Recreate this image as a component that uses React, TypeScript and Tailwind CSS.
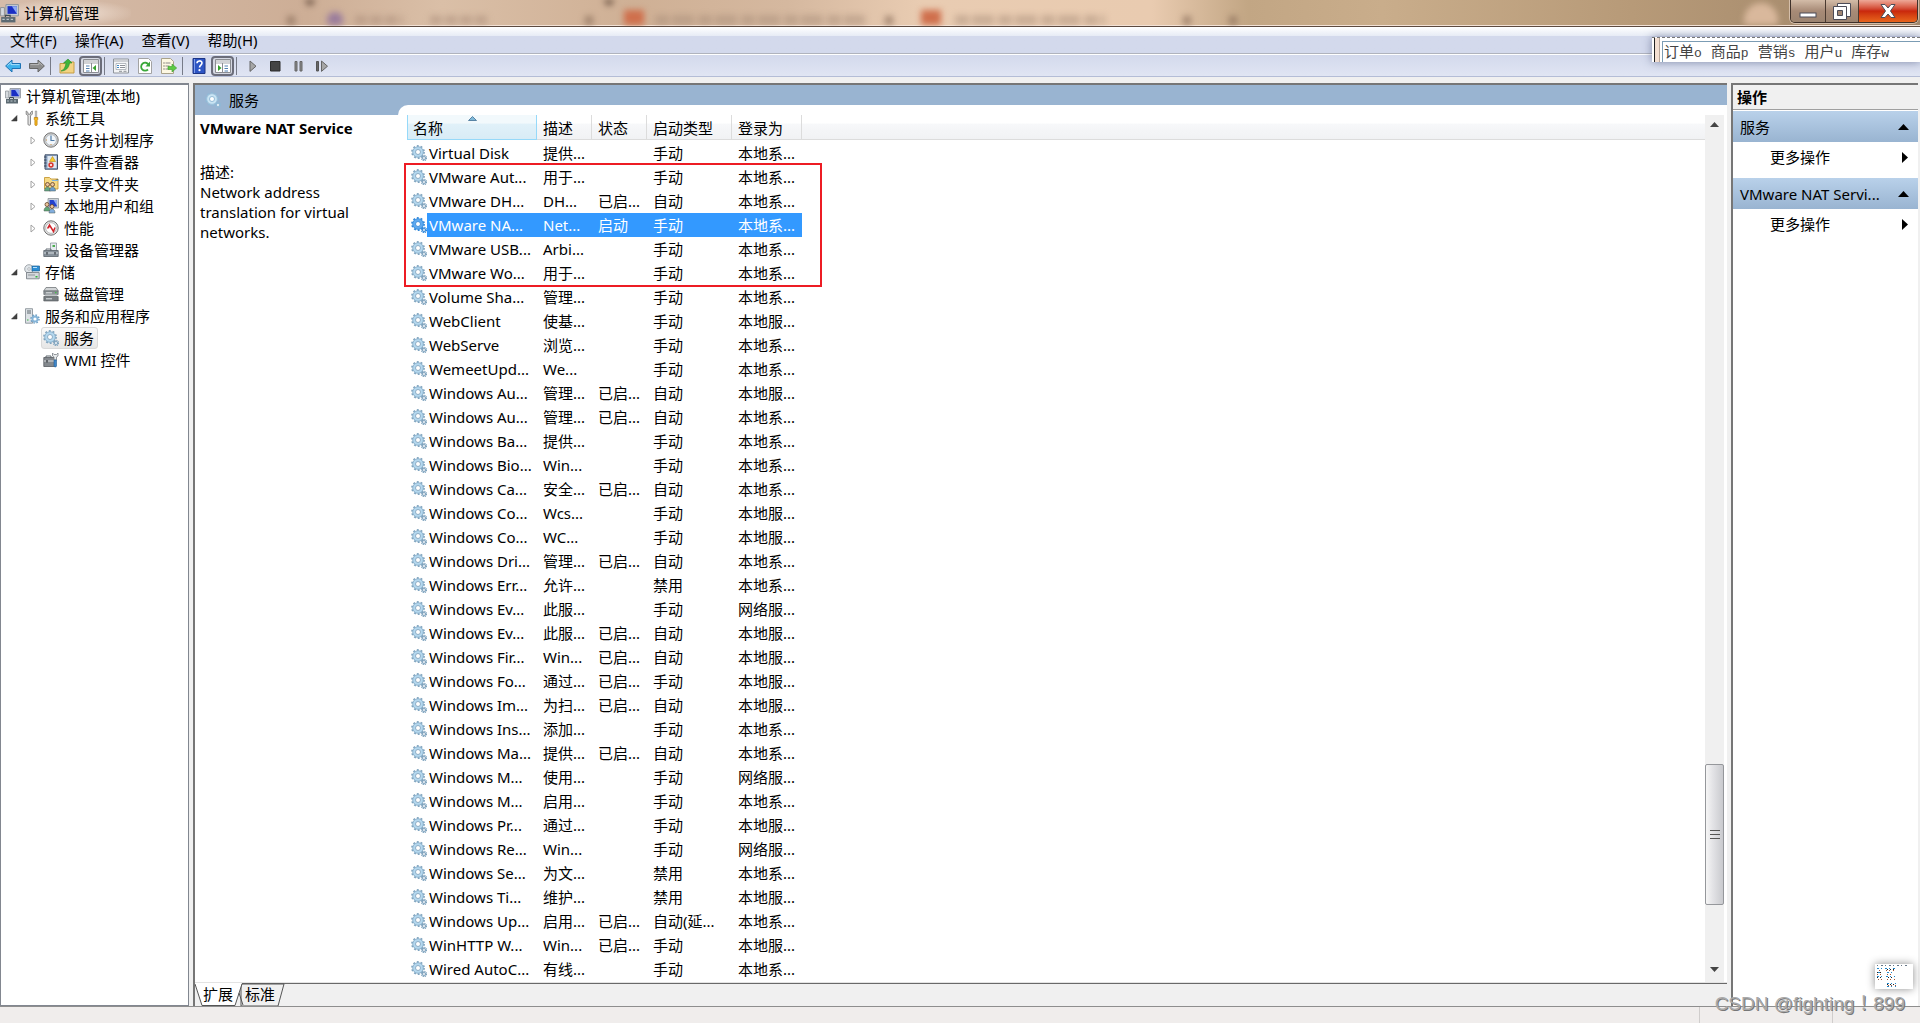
import type { ReactNode } from "react";
import clsx from "clsx";

type Service = {
  name: string;
  desc: string;
  status?: string;
  startup: string;
  logon: string;
};

const LOCAL_SYSTEM = "本地系...";
const LOCAL_SERVICE = "本地服...";
const NETWORK_SERVICE = "网络服...";
const STARTED = "已启...";

const services: Service[] = [
  { name: "Virtual Disk", desc: "提供...", startup: "手动", logon: LOCAL_SYSTEM },
  { name: "VMware Aut...", desc: "用于...", startup: "手动", logon: LOCAL_SYSTEM },
  { name: "VMware DH...", desc: "DH...", status: STARTED, startup: "自动", logon: LOCAL_SYSTEM },
  { name: "VMware NA...", desc: "Net...", status: "启动", startup: "手动", logon: LOCAL_SYSTEM },
  { name: "VMware USB...", desc: "Arbi...", startup: "手动", logon: LOCAL_SYSTEM },
  { name: "VMware Wo...", desc: "用于...", startup: "手动", logon: LOCAL_SYSTEM },
  { name: "Volume Sha...", desc: "管理...", startup: "手动", logon: LOCAL_SYSTEM },
  { name: "WebClient", desc: "使基...", startup: "手动", logon: LOCAL_SERVICE },
  { name: "WebServe", desc: "浏览...", startup: "手动", logon: LOCAL_SYSTEM },
  { name: "WemeetUpd...", desc: "We...", startup: "手动", logon: LOCAL_SYSTEM },
  { name: "Windows Au...", desc: "管理...", status: STARTED, startup: "自动", logon: LOCAL_SERVICE },
  { name: "Windows Au...", desc: "管理...", status: STARTED, startup: "自动", logon: LOCAL_SYSTEM },
  { name: "Windows Ba...", desc: "提供...", startup: "手动", logon: LOCAL_SYSTEM },
  { name: "Windows Bio...", desc: "Win...", startup: "手动", logon: LOCAL_SYSTEM },
  { name: "Windows Ca...", desc: "安全...", status: STARTED, startup: "自动", logon: LOCAL_SYSTEM },
  { name: "Windows Co...", desc: "Wcs...", startup: "手动", logon: LOCAL_SERVICE },
  { name: "Windows Co...", desc: "WC...", startup: "手动", logon: LOCAL_SERVICE },
  { name: "Windows Dri...", desc: "管理...", status: STARTED, startup: "自动", logon: LOCAL_SYSTEM },
  { name: "Windows Err...", desc: "允许...", startup: "禁用", logon: LOCAL_SYSTEM },
  { name: "Windows Ev...", desc: "此服...", startup: "手动", logon: NETWORK_SERVICE },
  { name: "Windows Ev...", desc: "此服...", status: STARTED, startup: "自动", logon: LOCAL_SERVICE },
  { name: "Windows Fir...", desc: "Win...", status: STARTED, startup: "自动", logon: LOCAL_SERVICE },
  { name: "Windows Fo...", desc: "通过...", status: STARTED, startup: "手动", logon: LOCAL_SERVICE },
  { name: "Windows Im...", desc: "为扫...", status: STARTED, startup: "自动", logon: LOCAL_SERVICE },
  { name: "Windows Ins...", desc: "添加...", startup: "手动", logon: LOCAL_SYSTEM },
  { name: "Windows Ma...", desc: "提供...", status: STARTED, startup: "自动", logon: LOCAL_SYSTEM },
  { name: "Windows M...", desc: "使用...", startup: "手动", logon: NETWORK_SERVICE },
  { name: "Windows M...", desc: "启用...", startup: "手动", logon: LOCAL_SYSTEM },
  { name: "Windows Pr...", desc: "通过...", startup: "手动", logon: LOCAL_SERVICE },
  { name: "Windows Re...", desc: "Win...", startup: "手动", logon: NETWORK_SERVICE },
  { name: "Windows Se...", desc: "为文...", startup: "禁用", logon: LOCAL_SYSTEM },
  { name: "Windows Ti...", desc: "维护...", startup: "禁用", logon: LOCAL_SERVICE },
  { name: "Windows Up...", desc: "启用...", status: STARTED, startup: "自动(延...", logon: LOCAL_SYSTEM },
  { name: "WinHTTP W...", desc: "Win...", status: STARTED, startup: "手动", logon: LOCAL_SERVICE },
  { name: "Wired AutoC...", desc: "有线...", startup: "手动", logon: LOCAL_SYSTEM },
];

const SELECTED = 3;

function Icon({ children, className = "size-4" }: { children: ReactNode; className?: string }) {
  return (
    <svg viewBox="0 0 16 16" className={clsx("shrink-0", className)} aria-hidden="true">
      {children}
    </svg>
  );
}

function GearsIcon({ selected, pale }: { selected?: boolean; pale?: boolean }) {
  const rim = selected ? "#2f86d8" : pale ? "#8fb9d6" : "#7fa3be";
  const body = selected ? "#5eaaf0" : pale ? "#c9e4f3" : "#b3d7ee";
  return (
    <Icon>
      <circle cx="7" cy="7" r="6" fill="none" stroke={rim} strokeWidth="1.8" strokeDasharray="1.885 1.885" />
      <circle cx="7" cy="7" r="4" fill="none" stroke={body} strokeWidth="3" />
      <circle cx="7" cy="7" r="5.3" fill="none" stroke={rim} strokeWidth=".7" />
      <circle cx="7" cy="7" r="2.5" fill="#fff" stroke={rim} strokeWidth=".9" />
      <circle cx="13" cy="13" r="2.5" fill="none" stroke={rim} strokeWidth="1.4" strokeDasharray="1.2 .76" />
      <circle cx="13" cy="13" r="1.5" fill="#fff" stroke={rim} strokeWidth="1.2" />
    </Icon>
  );
}

function ComputerIcon({ className }: { className?: string }) {
  return (
    <Icon className={className}>
      <path d="M5 .5h10.500v9.500H5z" fill="#c9cfd6" stroke="#8b929a" strokeWidth=".8" />
      <path d="M6.300 1.800h7.900v6.500H6.300z" fill="#1a2fc4" />
      <path d="M10 1.800h4.200v6.500z" fill="#8ea9f2" />
      <path d="M.5 3h3.200v7H.5z" fill="#d6dade" stroke="#848a90" strokeWidth=".7" />
      <path d="M1 11h12v4.500H1z" fill="#5c6a72" />
      <path d="M4.500 11V9.500h4V11" fill="none" stroke="#3f4b52" />
      <path d="M2 13h10" stroke="#b9c4ca" strokeDasharray="2 1.500" />
    </Icon>
  );
}

function ToolsIcon() {
  return (
    <Icon>
      <path d="M2.200 1v3.300l1.800 1.200v8.700c0 1.400 2.500 1.400 2.500 0V5.500L8.300 4.300V1L6.500 2.500v1.700H4V2.500z" fill="#e4e4e4" stroke="#7d7d7d" strokeWidth=".9" />
      <path d="M11.300 1h1.400v6.500h-1.400z" fill="#d0d0d0" stroke="#888" strokeWidth=".6" />
      <path d="M10.300 7.500h3.400v2l-.6 1v4.300c0 1-2.200 1-2.200 0v-4.300l-.6-1z" fill="#f5b81f" stroke="#b97a09" strokeWidth=".7" />
    </Icon>
  );
}

function ClockIcon() {
  return (
    <Icon>
      <circle cx="8" cy="8" r="7.200" fill="#d3d3d3" stroke="#757575" strokeWidth="1" />
      <circle cx="8" cy="8" r="5.400" fill="#f2f6fa" stroke="#a2a9af" strokeWidth=".7" />
      <path d="M8 3.500V8.500h3.500" fill="none" stroke="#4d7aa6" strokeWidth="1.200" />
      <path d="M8 12v1M3 8h1" stroke="#c98a3c" />
    </Icon>
  );
}

function EventIcon() {
  return (
    <Icon>
      <path d="M2 .8h12.500v14.400H2z" fill="#8ea6c4" stroke="#44536b" />
      <path d="M4.500 2h9v12h-9z" fill="#dfe8f3" />
      <path d="M1 3h2.500M1 6h2.500M1 9h2.500M1 12h2.500" stroke="#35435a" />
      <path d="M9.500 2.500l3 5h-6z" fill="#f7cc2c" stroke="#b98c0b" strokeWidth=".6" />
      <circle cx="8" cy="11" r="2.700" fill="#d93a31" />
      <path d="M7 10l2 2M9 10l-2 2" stroke="#fff" strokeWidth=".8" />
    </Icon>
  );
}

function Person({ x, y, color }: { x: number; y: number; color: string }) {
  return (
    <g>
      <path d={`M${x - 3} ${y + 6.5}c0-5.500 6-5.500 6 0z`} fill={color} stroke="#4b5a52" strokeWidth=".5" />
      <circle cx={x} cy={y} r="2" fill="#edc59b" stroke="#5e4029" strokeWidth=".8" />
    </g>
  );
}

function SharedIcon() {
  return (
    <Icon>
      <path d="M1.500 3V1.500h5l1.500 1.500h7v10h-13.500z" fill="#f6d983" stroke="#c69b38" strokeWidth=".9" />
      <path d="M9 4.500h6v-1" stroke="#7fb4de" />
      <Person x={4.500} y={8.500} color="#65a883" />
      <Person x={9.500} y={8.500} color="#6d9dcb" />
    </Icon>
  );
}

function UsersIcon() {
  return (
    <Icon>
      <path d="M5 .5h10.500v9.500H5z" fill="#ccd2d8" stroke="#8d949b" strokeWidth=".8" />
      <path d="M6.500 2h7.500v6.500H6.500z" fill="#2341cd" />
      <path d="M10.500 2H14v6z" fill="#8fa9f2" />
      <Person x={4} y={6.500} color="#60a877" />
      <Person x={9} y={8.500} color="#82aede" />
    </Icon>
  );
}

function PerformanceIcon() {
  return (
    <Icon>
      <circle cx="8" cy="8" r="7.200" fill="#e4e4e4" stroke="#6f6f6f" />
      <circle cx="8" cy="8" r="5.300" fill="#fff" stroke="#999" strokeWidth=".6" />
      <path d="M4.500 8.500l2-3.500 4 6.500 1.500-4M6.500 5l-1 3" fill="none" stroke="#d0252b" strokeWidth="1.500" />
    </Icon>
  );
}

function DeviceIcon() {
  return (
    <Icon>
      <path d="M7.500 1h6v8h-6z" fill="#e6ebef" stroke="#8b949c" strokeWidth=".8" />
      <path d="M9.500 3h2.500v2h-2.500z" fill="#4cae4f" />
      <path d="M3 8.500V7h5v1.500" fill="none" stroke="#666f76" />
      <path d="M.8 8.500h14.400v6H.8z" fill="#87919a" stroke="#59626a" strokeWidth=".8" />
      <path d="M1 11h14" stroke="#d6dce1" />
      <path d="M4 10v2.500M12 10v2.500" stroke="#343b41" strokeWidth="1.200" />
    </Icon>
  );
}

function StorageIcon() {
  return (
    <Icon>
      <circle cx="5" cy="5" r="4.300" fill="#e1e6ea" stroke="#8b9298" strokeWidth=".8" />
      <circle cx="5" cy="5" r="1.300" fill="#fff" stroke="#8b9298" strokeWidth=".6" />
      <path d="M8 2h7.500v5H8z" fill="#2c8fd6" stroke="#1e5f92" strokeWidth=".7" />
      <path d="M9 3.500h4" stroke="#b7e0fa" />
      <path d="M2.500 8.500h12.700v6.300H2.500z" fill="#d4d8dc" stroke="#70777d" strokeWidth=".8" />
      <path d="M4 11h7" stroke="#8f969b" />
      <path d="M11.500 12h2v1.500h-2z" fill="#2fb53a" />
    </Icon>
  );
}

function DiskIcon() {
  return (
    <Icon>
      <path d="M3 1.500h10l2.300 3.500H.7z" fill="#d2d5d7" stroke="#72777b" strokeWidth=".8" />
      <path d="M.8 5h14.400v3.500H.8z" fill="#8e9498" stroke="#5d6266" strokeWidth=".6" />
      <path d="M2.500 8.500h11l1.700 2H.8z" fill="#c2c6c9" />
      <path d="M.8 10.500h14.400V15H.8z" fill="#767c80" stroke="#505458" strokeWidth=".6" />
      <path d="M3 12.800h6M3 6.800h6" stroke="#e2e4e6" />
      <path d="M12 6h1.500v1.200H12z" fill="#45bd49" />
    </Icon>
  );
}

function ServerIcon() {
  return (
    <Icon>
      <path d="M1.500.7h7v14.500h-7z" fill="#dde2e6" stroke="#8c949b" strokeWidth=".9" />
      <path d="M3 3h4M3 5h4" stroke="#5f696f" />
      <path d="M3 12h1.500" stroke="#35b23e" strokeWidth="1.200" />
      <circle cx="11" cy="11" r="4" fill="none" stroke="#6d9dc2" strokeWidth="1.500" strokeDasharray="1.570 1.570" />
      <circle cx="11" cy="11" r="2.500" fill="#fff" stroke="#84b4d8" strokeWidth="1.800" />
    </Icon>
  );
}

function WmiIcon() {
  return (
    <Icon>
      <path d="M3 5.500V4h5v1.500" fill="none" stroke="#5b646b" />
      <path d="M.8 5.500h11.700v9H.8z" fill="#84898e" stroke="#565b60" strokeWidth=".8" />
      <path d="M1 9h11.500" stroke="#dadde0" />
      <path d="M4 8v2.500" stroke="#33383c" strokeWidth="1.300" />
      <path d="M9.500 1v3l1.500 1v3h2.500V5L15 4V1l-1.500 1.500h-2.500z" fill="#e8ebed" stroke="#7b8287" strokeWidth=".8" />
      <path d="M11 8h2.500v6c0 1.300-2.500 1.300-2.500 0z" fill="#3f87c9" stroke="#235d93" strokeWidth=".6" />
    </Icon>
  );
}

type TreeItem = {
  label: string;
  level: 0 | 1 | 2;
  icon: ReactNode;
  arrow?: "open" | "closed";
  selected?: boolean;
};

const tree: TreeItem[] = [
  { label: "计算机管理(本地)", level: 0, icon: <ComputerIcon /> },
  { label: "系统工具", level: 1, icon: <ToolsIcon />, arrow: "open" },
  { label: "任务计划程序", level: 2, icon: <ClockIcon />, arrow: "closed" },
  { label: "事件查看器", level: 2, icon: <EventIcon />, arrow: "closed" },
  { label: "共享文件夹", level: 2, icon: <SharedIcon />, arrow: "closed" },
  { label: "本地用户和组", level: 2, icon: <UsersIcon />, arrow: "closed" },
  { label: "性能", level: 2, icon: <PerformanceIcon />, arrow: "closed" },
  { label: "设备管理器", level: 2, icon: <DeviceIcon /> },
  { label: "存储", level: 1, icon: <StorageIcon />, arrow: "open" },
  { label: "磁盘管理", level: 2, icon: <DiskIcon /> },
  { label: "服务和应用程序", level: 1, icon: <ServerIcon />, arrow: "open" },
  { label: "服务", level: 2, icon: <GearsIcon />, selected: true },
  { label: "WMI 控件", level: 2, icon: <WmiIcon /> },
];

const treeIndent = ["pl-0.5", "pl-[9px]", "pl-7"];

function TitleBar() {
  return (
    <header className="relative flex h-[27px] items-start justify-between overflow-hidden border-b border-[#5c4a40] bg-[linear-gradient(90deg,#d6bcaa_0%,#cdae96_16%,#dabfa7_23%,#cfb095_33%,#d5b89f_41%,#e9ccb2_48%,#e9cbb0_60%,#c2a684_65%,#c9ad8b_72%,#b79a78_85%,#9f8569_100%)]">
      <div className="absolute inset-x-0 bottom-0 h-px bg-[#f3e2d6]" />
      {/* browser tabs showing through the glass */}
      <svg className="absolute top-0 left-0 h-[25px] w-[1800px] blur-[3px]" aria-hidden="true">
        <circle cx="335" cy="20" r="8" fill="#9a7c9c" />
        <path d="M355 20h48M430 20h58" stroke="#a98c77" strokeWidth="9" strokeOpacity=".5" strokeDasharray="12 3" />
        <path d="M655 20h210M955 20h150" stroke="#a58a75" strokeWidth="10" strokeOpacity=".45" strokeDasharray="14 3 22 4" />
        <path d="M624 10h20v16h-20zM921 10h20v16h-20z" fill="#cf6f4c" />
        <path d="M287 16h8v9h-8zM585 16h8v9h-8zM885 16h8v9h-8zM1183 16h8v9h-8zM1229 16h8v9h-8z" fill="#8c6f5b" fillOpacity=".7" />
        <path d="M603 0h12l-6 6zM304 0h12l-6 6z" fill="#5d4638" />
        <circle cx="1761" cy="20" r="17" fill="#d9b89c" />
      </svg>
      <div className="relative flex h-[26px] items-center gap-[5px] bg-[radial-gradient(ellipse_at_center,rgba(255,245,238,0.75),transparent_75%)] pr-8">
        <ComputerIcon className="size-[19px]" />
        <h1>计算机管理</h1>
      </div>
      <div className="relative mr-0.5 flex h-[23px] rounded-b-[5px] border border-t-0 border-[#3f312a] shadow-[0_0_0_1px_rgba(255,240,230,0.5)]">
        <button aria-label="最小化" className="flex w-[35px] items-center justify-center rounded-bl border-r border-[#4a3a30] bg-linear-to-b from-[#d3bca8] via-[#a78a76] via-50% to-[#9c8470]">
          <svg width="18" height="16" aria-hidden="true"><rect x="1" y="10" width="16" height="4" fill="#fff" stroke="#4c4c58" /></svg>
        </button>
        <button aria-label="还原" className="flex w-[33px] items-center justify-center border-r border-[#4a3a30] bg-linear-to-b from-[#d3bca8] via-[#a78a76] via-50% to-[#9c8470]">
          <svg width="20" height="18" aria-hidden="true">
            <path d="M5.500 1.500h13v13h-13z" fill="#fff" stroke="#4c4c58" />
            <path d="M1.500 4.500h13v13h-13z" fill="#fff" stroke="#4c4c58" />
            <path d="M5.500 8.500h5v5h-5z" fill="#a08672" stroke="#4c4c58" />
          </svg>
        </button>
        <button aria-label="关闭" className="flex w-[58px] items-center justify-center rounded-br bg-linear-to-b from-[#eda898] via-[#c9260c] via-50% to-[#e8641c]">
          <svg width="18" height="16" aria-hidden="true">
            <path d="M2 1.500h4l3 3.500 3-3.500h4L11.500 8l4.500 6.500h-4L9 11l-3 3.500H2L6.500 8z" fill="#fff" stroke="#4c4c58" />
          </svg>
        </button>
      </div>
    </header>
  );
}

function ToolButton({ label, pressed, children }: { label: string; pressed?: boolean; children: ReactNode }) {
  return (
    <button
      aria-label={label}
      className={clsx(
        "flex h-5 w-[23px] items-center justify-center",
        pressed && "rounded border-2 border-[#6b6d7a] bg-[#d5d8e2]",
      )}
    >
      {children}
    </button>
  );
}

function Separator() {
  return <div className="mr-[3px] ml-px h-[18px] w-px bg-[#777b88]" />;
}

function PaneIcon({ flip }: { flip?: boolean }) {
  return (
    <Icon>
      <g transform={flip ? "matrix(-1 0 0 1 16 0)" : undefined}>
        <path d="M.5 1.500h15v13H.5z" fill="#fff" stroke="#8b8d92" />
        <path d="M1 3h14M1 5h14" stroke="#a3a6ac" />
        <path d="M8.500 5v9.500" stroke="#8b8d92" />
        <path d="M3 8h3.500M3 10.500h3.500M3 13h3.500" stroke="#4f7fb0" />
        <path d="M13 7v6l-3.500-3z" fill="#35a02c" />
      </g>
    </Icon>
  );
}

function Toolbar() {
  return (
    <div className="flex h-[23px] items-center gap-px border-t border-b border-t-white border-b-[#b4bdd6] bg-linear-to-b from-[#d3d9ec] to-[#e0e5f3] pl-px">
      <ToolButton label="后退">
        <Icon><path d="M.6 8L7 2v3.500h8.500v5H7V14z" fill="#3fb2ec" stroke="#1e72b4" /><path d="M2.500 7.500L6 4.300v2.300h8.500" fill="none" stroke="#a5defa" /></Icon>
      </ToolButton>
      <ToolButton label="前进">
        <Icon><path d="M15.400 8L9 2v3.500H.5v5H9V14z" fill="#8c8c8c" stroke="#666" /><path d="M1.500 6.600H10V4.300L13.500 7.500" fill="none" stroke="#b8b8b8" /></Icon>
      </ToolButton>
      <Separator />
      <ToolButton label="向上">
        <Icon>
          <path d="M1 5.500h5L7.500 4H15v11H1z" fill="#f3d382" stroke="#c59d44" />
          <path d="M2 13C5 12 6.500 9 7 5H4.500L9 1l4 4h-2.500C10 10 6.500 13 2 13z" fill="#3fb53a" stroke="#27892b" strokeWidth=".6" />
        </Icon>
      </ToolButton>
      <ToolButton label="显示/隐藏控制台树" pressed><PaneIcon /></ToolButton>
      <Separator />
      <ToolButton label="属性">
        <Icon>
          <path d="M.5 1h15v14H.5z" fill="#f3f4f6" stroke="#8f949b" />
          <path d="M1 3h14" stroke="#a9adb3" />
          <path d="M3 5.500h10v6H3z" fill="#fff" stroke="#9aa0a8" strokeWidth=".7" />
          <path d="M4 7.500h2M4 9.500h2" stroke="#3d87c4" />
          <path d="M7 7.500h5M7 9.500h5" stroke="#8c9096" />
          <path d="M6 13.300h3M10.500 13.300h3" stroke="#8c9096" />
        </Icon>
      </ToolButton>
      <ToolButton label="刷新">
        <Icon>
          <path d="M1.500.5h10l3 3v12h-13z" fill="#fff" stroke="#a3a3a3" />
          <path d="M11 11.500a4 4 0 1 1 .5-5" fill="none" stroke="#3aa83a" strokeWidth="1.800" />
          <path d="M13 3.500v5H8.500z" fill="#3aa83a" />
        </Icon>
      </ToolButton>
      <ToolButton label="导出列表">
        <Icon>
          <path d="M.5.500h9l3 3v12H.5z" fill="#fdf8e3" stroke="#a9a28a" />
          <path d="M2.500 5h1M2.500 8h1M2.500 11h1" stroke="#333" />
          <path d="M4.500 5h5M4.500 8h4M4.500 11h4" stroke="#8a8a8a" />
          <path d="M7 8.500h4V6l4.700 4-4.700 4v-2.500H7z" fill="#5cc944" stroke="#3a9c2c" strokeWidth=".6" />
        </Icon>
      </ToolButton>
      <Separator />
      <ToolButton label="帮助">
        <Icon>
          <path d="M2 .5h12v15H2z" fill="#2d55c4" stroke="#1c3585" />
          <path d="M3.500 1v14" stroke="#7f9dea" />
          <path d="M6 5.200c0-3 5-3 5-.2 0 2-2.500 2.200-2.500 4.500" fill="none" stroke="#fff" strokeWidth="1.600" />
          <circle cx="8.500" cy="12.200" r="1.100" fill="#fff" />
        </Icon>
      </ToolButton>
      <ToolButton label="显示/隐藏操作窗格" pressed><PaneIcon flip /></ToolButton>
      <Separator />
      <div className="flex">
        <ToolButton label="启动">
          <Icon><path d="M5 3l6 5.200-6 5.200z" fill="#a6a6a6" stroke="#666" /></Icon>
        </ToolButton>
        <ToolButton label="停止">
          <Icon><path d="M2.500 3.500h9.500V13H2.500z" fill="#444" stroke="#2c2c2c" /></Icon>
        </ToolButton>
        <ToolButton label="暂停">
          <Icon><path d="M4 3.500h2v9.500H4zM9 3.500h2v9.500H9z" fill="#888" stroke="#666" /></Icon>
        </ToolButton>
        <ToolButton label="重新启动">
          <Icon><path d="M2.500 3.500h2v9.500h-2z" fill="#666" stroke="#555" /><path d="M7.500 3l6 5.200-6 5.200z" fill="#a6a6a6" stroke="#666" /></Icon>
        </ToolButton>
      </div>
    </div>
  );
}

function ConsoleTree() {
  return (
    <nav className="w-[189px] shrink-0 border border-t-2 border-[#828790] bg-white">
      <ul>
        {tree.map((item) => (
          <li key={item.label} className={clsx("flex h-[22px] items-center", treeIndent[item.level])}>
            {item.level > 0 && (
              <span className="flex w-3 pl-px">
                {item.arrow === "open" && (
                  <svg width="7" height="7" aria-hidden="true"><path d="M6 .5V6H.5z" fill="#404040" stroke="#333" strokeWidth=".5" /></svg>
                )}
                {item.arrow === "closed" && (
                  <svg width="6" height="9" aria-hidden="true"><path d="M1 1l4 3.500L1 8z" fill="#fff" stroke="#a2a2a2" /></svg>
                )}
              </span>
            )}
            <button
              className={clsx(
                "flex h-[22px] items-center gap-[5px] rounded-[3px] border px-px pr-[3px] whitespace-nowrap",
                item.selected ? "border-[#d9d9d9] bg-linear-to-b from-[#fafafa] to-[#e6e6e6]" : "border-transparent",
              )}
            >
              {item.icon}
              {item.label}
            </button>
          </li>
        ))}
      </ul>
    </nav>
  );
}

const columns = ["名称", "描述", "状态", "启动类型", "登录为"];

function ServiceTable() {
  return (
    <div className="relative min-w-0 flex-1">
      <table className="w-full table-fixed border-collapse text-left whitespace-nowrap">
        <colgroup>
          <col className="w-[130px]" />
          <col className="w-[55px]" />
          <col className="w-[55px]" />
          <col className="w-[85px]" />
          <col className="w-[70px]" />
          <col />
        </colgroup>
        <thead>
          <tr className="h-[26px]">
            {columns.map((column, i) => (
              <th key={column} className="p-0 align-top font-normal">
                <button
                  className={clsx(
                    "relative flex h-[25px] w-full items-center pt-0.5 text-left",
                    i === 0
                      ? "border border-t-0 border-[#96d9f9] bg-linear-to-b from-[#f2f9fc] from-35% via-[#e1f1f9] via-36% to-[#d8ecf6] pl-[5px]"
                      : "border-r border-b border-[#dcdcdc] bg-linear-to-b from-white from-35% via-[#f7f8fa] via-36% to-[#f1f2f4] pl-1.5",
                  )}
                >
                  {column}
                  {i === 0 && (
                    <svg width="9" height="5" className="absolute top-px left-1/2 -ml-1" aria-hidden="true">
                      <path d="M.5 4.500L4.500.5l4 4z" fill="#7fb9d8" stroke="#3f6f93" strokeWidth=".8" />
                    </svg>
                  )}
                </button>
              </th>
            ))}
            <td className="p-0 align-top">
              <div className="h-[25px] border-b border-[#dcdcdc] bg-linear-to-b from-white from-35% via-[#f7f8fa] via-36% to-[#f1f2f4]" />
            </td>
          </tr>
        </thead>
        <tbody>
          {services.map((service, i) => {
            const selected = i === SELECTED;
            const cell = clsx("p-0 pl-1.5", selected && "bg-[#3399ff] text-white");
            return (
              <tr key={i} className="h-6">
                <td className="p-0">
                  <div className="flex h-6 items-center pl-1">
                    <GearsIcon selected={selected} />
                    <span className={clsx("flex h-6 flex-1 items-center pl-0.5", selected && "bg-[#3399ff] text-white")}>
                      {service.name}
                    </span>
                  </div>
                </td>
                <td className={cell}>{service.desc}</td>
                <td className={cell}>{service.status}</td>
                <td className={cell}>{service.startup}</td>
                <td className={cell}>{service.logon}</td>
                <td />
              </tr>
            );
          })}
        </tbody>
      </table>
      {/* highlight round the VMware services */}
      <div className="pointer-events-none absolute top-12 -left-[3px] h-[124px] w-[418px] border-2 border-[#ed1c24]" />
    </div>
  );
}

function ScrollBar() {
  return (
    <div className="mr-[3px] flex w-[19px] shrink-0 flex-col items-center bg-[#f0f0f0]">
      <button aria-label="向上滚动" className="flex h-[19px] items-center">
        <svg width="9" height="5" aria-hidden="true"><path d="M0 5l4.500-5L9 5z" fill="#444" /></svg>
      </button>
      <div className="flex-12" />
      <div className="flex h-[141px] w-full flex-col items-center justify-center gap-[3px] rounded-xs border border-[#95979b] bg-linear-to-r from-[#f6f6f6] via-[#e3e3e6] via-40% to-[#c9cace]">
        <div className="h-px w-2.5 bg-[#555]" />
        <div className="h-px w-2.5 bg-[#555]" />
        <div className="h-px w-2.5 bg-[#555]" />
      </div>
      <div className="flex-1" />
      <button aria-label="向下滚动" className="flex h-[25px] items-center">
        <svg width="9" height="5" aria-hidden="true"><path d="M0 0l4.500 5L9 0z" fill="#444" /></svg>
      </button>
    </div>
  );
}

function ViewTabs() {
  return (
    <div className="relative flex h-[23px] items-center border-t border-[#696969] bg-[#f0f0f0] pb-0.5 pl-2">
      <svg width="92" height="23" className="absolute -top-px left-0" aria-hidden="true">
        <path d="M46 1h43l-6 22H46z" fill="#f0f0f0" stroke="#555" />
        <path d="M-1 0l8 22.500h33L47 0z" fill="#fff" />
        <path d="M0 1l7 21.500h33L47 1M44 10l4 12" fill="none" stroke="#555" />
      </svg>
      <button className="relative">扩展</button>
      <button className="relative ml-3">标准</button>
    </div>
  );
}

function ServicesPane() {
  return (
    <main className="flex min-w-0 flex-1 flex-col border-t-2 border-l-2 border-[#767676] bg-white">
      <div className="flex h-[30px] bg-[#99b4d1]">
        <div className="flex w-[203px] items-center gap-2 pl-2.5">
          <GearsIcon pale />
          <h2>服务</h2>
        </div>
        <div className="h-2.5 flex-1 self-end rounded-tl-[10px] bg-white" />
      </div>
      <div className="flex flex-1">
        <section className="w-[212px] shrink-0 pt-[3px] pr-12 pl-[5px] leading-5">
          <h3 className="font-bold whitespace-nowrap">VMware NAT Service</h3>
          <p className="pt-6">描述:</p>
          <p>Network address translation for virtual networks.</p>
        </section>
        <ServiceTable />
        <ScrollBar />
      </div>
      <div className="h-px bg-[#e3e3e3]" />
      <ViewTabs />
    </main>
  );
}

function ActionGroup({ title }: { title: string }) {
  return (
    <section className="pb-1.5">
      <button className="flex h-[31px] w-full items-center justify-between bg-linear-to-b from-[#b9d1ea] to-[#99b4d1] pr-[9px] pl-[7px] text-left whitespace-nowrap">
        {title}
        <svg width="11" height="6" aria-hidden="true"><path d="M0 6l5.500-6L11 6z" fill="#000" /></svg>
      </button>
      <button className="flex h-[30px] w-full items-center justify-between pr-2.5 pl-[37px]">
        更多操作
        <svg width="6" height="11" aria-hidden="true"><path d="M0 0l6 5.500L0 11z" fill="#000" /></svg>
      </button>
    </section>
  );
}

function ActionsPane() {
  return (
    <aside className="mr-0.5 w-[187px] shrink-0 border-t-2 border-l-2 border-[#767676] bg-white">
      <h2 className="mb-px h-[25px] border-b border-[#a0a0a0] bg-[#f0f0f0] pl-1 leading-6 font-bold">操作</h2>
      <ActionGroup title="服务" />
      <ActionGroup title="VMware NAT Servi..." />
    </aside>
  );
}

const shortcuts = [
  ["订单", "o"],
  ["商品", "p"],
  ["营销", "s"],
  ["用户", "u"],
  ["库存", "w"],
];

function FloatingShortcuts() {
  return (
    <div className="absolute top-[37px] right-0 flex h-[25px] w-[268px] border-t border-dashed border-t-[#777] bg-white pl-0.5 shadow-[0_0_10px_rgba(70,80,120,0.6)]">
      <div className="w-1.5 border-x border-l-[#222] border-r-[#b9a79b] bg-[#f3dfd2]" />
      <div className="mt-[3px] ml-0.5 flex flex-1 items-center gap-[9px] border-t border-l border-[#7b9cb4] pl-px">
        {shortcuts.map(([label, key]) => (
          <button key={key} className="whitespace-nowrap text-[#444]">
            {label}
            <span className="font-['Liberation_Mono',monospace] text-[13px]">{key}</span>
          </button>
        ))}
      </div>
    </div>
  );
}

function PreviewThumb() {
  return (
    <div className="absolute right-[7px] bottom-[34px] h-[25px] w-[38px] bg-white shadow-[0_0_8px_rgba(0,0,0,0.45)]">
      <svg width="38" height="25" aria-hidden="true">
        <path d="M2 1.500h32" stroke="#678" strokeDasharray="1 3 2 2" />
        <path d="M2 4.500h18M3 8.500h4M12 8.500h8M2 12.500h5M11 12.500h9M12 19.500h9M12 22.500h9" stroke="#28c" strokeDasharray="2 2 1 3" />
        <path d="M4 6.500h3M11 6.500h8M2 10.500h5M12 10.500h7M3 15.500h4M12 15.500h8M13 21.500h9" stroke="#a53" strokeDasharray="1 2 1 3" />
        <path d="M2 8.500h6M12 5.500h7M2 13.500h6M13 13.500h6M12 20.500h9" stroke="#222" strokeDasharray="1 2" />
      </svg>
    </div>
  );
}

export default function App() {
  return (
    <div className="relative flex min-h-screen flex-col overflow-hidden bg-[#f0f0f0] font-['Noto_Sans','Noto_Sans_CJK_SC',sans-serif] text-[15px] leading-5 text-black">
      <TitleBar />
      <div className="flex h-[27px] items-center gap-0.5 border-b border-[#b0b3bd] bg-linear-to-b from-white via-[#e6ebf5] via-35% to-[#d3d9ec] to-36% pl-0.5">
        {["文件(F)", "操作(A)", "查看(V)", "帮助(H)"].map((label) => (
          <button key={label} className="px-2">{label}</button>
        ))}
      </div>
      <Toolbar />
      <div className="flex flex-1 gap-1 pt-1.5">
        <ConsoleTree />
        <ServicesPane />
        <ActionsPane />
      </div>
      <footer className="flex h-[17px] justify-end border-t border-[#8e8e8e] bg-[#f0edec]">
        <div className="w-[133px] border-l border-[#d0cdcc]" />
        <div className="w-[88px] border-l border-[#d0cdcc]" />
      </footer>
      <FloatingShortcuts />
      <PreviewThumb />
      <p className="absolute right-[15px] bottom-[7px] font-['Liberation_Sans','Noto_Sans_CJK_TC',sans-serif] text-[19px] leading-6 whitespace-nowrap text-[#aaa] [text-shadow:1px_1px_0_#777]">
        CSDN @fighting！899
      </p>
    </div>
  );
}
